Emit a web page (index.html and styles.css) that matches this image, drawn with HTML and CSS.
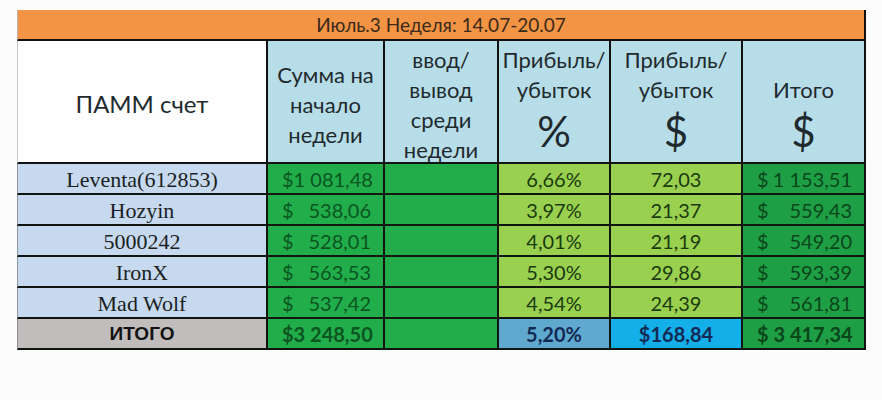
FILE: index.html
```html
<!DOCTYPE html>
<html lang="ru">
<head>
<meta charset="utf-8">
<title>ПАММ</title>
<link rel="stylesheet" href="styles.css">
</head>
<body>
<div class="page">
  <div class="sheet">
    <div class="title">Июль.3 Неделя: 14.07-20.07</div>

    <div class="hd hd-name">ПАММ счет</div>
    <div class="hd hd-mid"><span>Сумма на</span><span>начало</span><span>недели</span></div>
    <div class="hd hd-mid"><span>ввод/</span><span>вывод</span><span>среди</span><span>недели</span></div>
    <div class="hd hd-top"><span>Прибыль/</span><span>убыток</span><span class="sym">%</span></div>
    <div class="hd hd-top"><span>Прибыль/</span><span>убыток</span><span class="sym">$</span></div>
    <div class="hd hd-low"><span>Итого</span><span class="sym">$</span></div>

    <div class="c name">Leventa(612853)</div>
    <div class="c g acc"><span>$1 081,48</span></div>
    <div class="c g"></div>
    <div class="c lg">6,66%</div>
    <div class="c lg">72,03</div>
    <div class="c dg acc"><span>$</span><span>1 153,51</span></div>

    <div class="c name">Hozyin</div>
    <div class="c g acc"><span>$</span><span>538,06</span></div>
    <div class="c g"></div>
    <div class="c lg">3,97%</div>
    <div class="c lg">21,37</div>
    <div class="c dg acc"><span>$</span><span>559,43</span></div>

    <div class="c name">5000242</div>
    <div class="c g acc"><span>$</span><span>528,01</span></div>
    <div class="c g"></div>
    <div class="c lg">4,01%</div>
    <div class="c lg">21,19</div>
    <div class="c dg acc"><span>$</span><span>549,20</span></div>

    <div class="c name">IronX</div>
    <div class="c g acc"><span>$</span><span>563,53</span></div>
    <div class="c g"></div>
    <div class="c lg">5,30%</div>
    <div class="c lg">29,86</div>
    <div class="c dg acc"><span>$</span><span>593,39</span></div>

    <div class="c name">Mad Wolf</div>
    <div class="c g acc"><span>$</span><span>537,42</span></div>
    <div class="c g"></div>
    <div class="c lg">4,54%</div>
    <div class="c lg">24,39</div>
    <div class="c dg acc"><span>$</span><span>561,81</span></div>

    <div class="c total-name">ИТОГО</div>
    <div class="c g acc bold"><span>$3 248,50</span></div>
    <div class="c g"></div>
    <div class="c tb1 bold">5,20%</div>
    <div class="c tb2 bold">$168,84</div>
    <div class="c dg acc bold"><span>$ 3 417,34</span></div>
  </div>
</div>
</body>
</html>
```

FILE: styles.css
```css
* { box-sizing: border-box; }
html, body { margin: 0; padding: 0; background: #fcfcfc; }
.page {
  width: 882px;
  height: 400px;
  padding: 10px 0 0 17px;
}
.sheet {
  display: grid;
  grid-template-columns: 251px 117px 114px 112px 132px 123px;
  grid-template-rows: 31px 123px repeat(6, 31px);
  font-family: Lato, "Open Sans", sans-serif;
}
.title {
  grid-column: 1 / -1;
  background: #f29444;
  border-left: 1px solid #b9b2ad;
  border-right: 2px solid #161010;
  border-bottom: 2px solid #161010;
  text-align: center;
  font-size: 19px;
  line-height: 30px;
  color: #3a2a1c;
}
.hd {
  background: #b7dde8;
  border-right: 2px solid #121212;
  border-bottom: 2px solid #121212;
  color: #1f2a2e;
  font-size: 22px;
  display: flex;
  flex-direction: column;
  align-items: center;
  white-space: nowrap;
}
.hd span { line-height: 30px; }
.hd .sym { font-size: 42px; line-height: 44px; margin-top: 4px; }
.hd-name {
  background: #fefefe;
  border-left: 1px solid #c8c8c8;
  justify-content: center;
  font-size: 24px;
  padding-top: 4px;
}
.hd-mid { justify-content: center; padding-top: 7px; }
.hd-top { padding-top: 4px; }
.hd-low { padding-top: 34px; }

.c {
  border-right: 2px solid #101510;
  border-bottom: 2px solid #101510;
  display: flex;
  align-items: center;
  justify-content: center;
  font-size: 20px;
  padding-top: 1px;
  white-space: nowrap;
}
.name {
  background: #c6d9ee;
  border-left: 1px solid #8f98a2;
  font-family: "Liberation Serif", "Times New Roman", serif;
  font-size: 22px;
  color: #1b1e22;
  padding-top: 3px;
}
.g { background: #22ad4b; color: #0b5520; }
.dg { background: #1f9f45; color: #09461a; }
.lg { background: #9ad04f; color: #1a3a10; }
.acc { justify-content: space-between; padding: 1px 12px 0 14px; }
.acc span:only-child { margin-left: auto; }
.total-name {
  background: #c0bdbc;
  border-left: 1px solid #8f8f8f;
  font-family: "Liberation Sans", Arial, sans-serif;
  font-weight: bold;
  font-size: 19px;
  color: #121212;
}
.tb1 { background: #5fa9cf; color: #132a55; }
.tb2 { background: #14aee8; color: #132a55; }
.bold { font-weight: bold; }
```
